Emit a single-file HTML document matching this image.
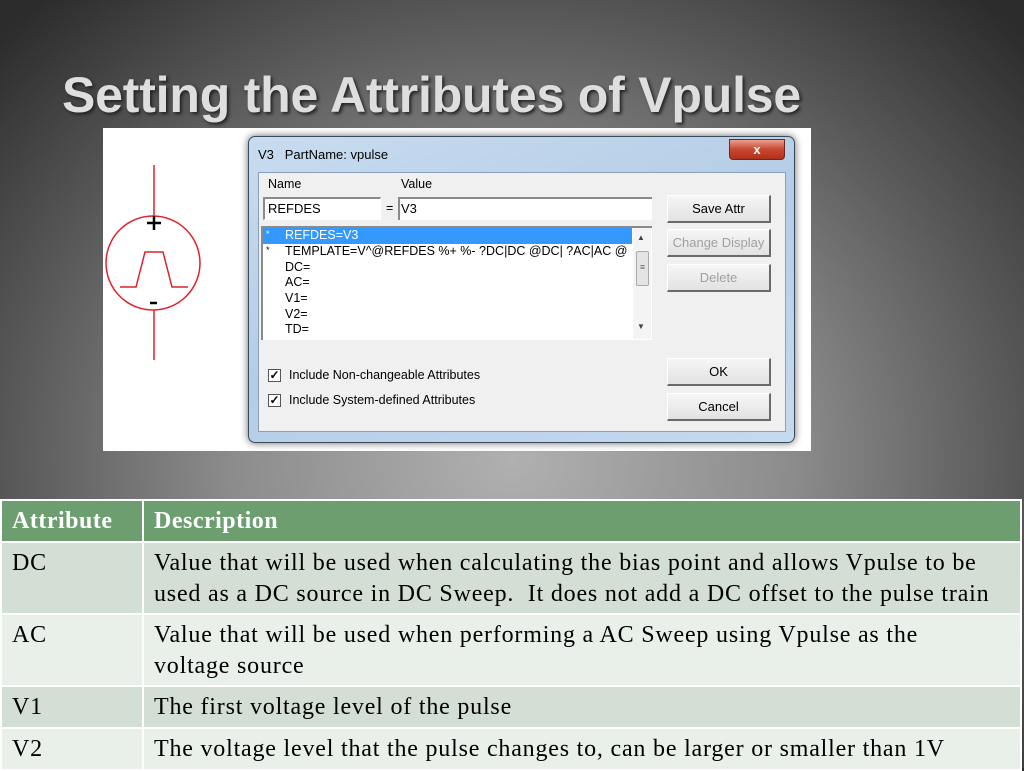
<!DOCTYPE html>
<html><head><meta charset="utf-8"><style>
*{margin:0;padding:0;box-sizing:border-box}
body{width:1024px;height:768px;overflow:hidden;position:relative;background:radial-gradient(ellipse 700px 620px at 512px 460px,#b0b0b0 0%,#8c8c8c 40%,#585858 72%,#2c2c2c 100%);font-family:"Liberation Sans",sans-serif}
.a{position:absolute}
h1{position:absolute;left:62px;top:70px;line-height:1;font-family:"Liberation Sans",sans-serif;font-size:50px;font-weight:bold;color:#dedede;letter-spacing:-0.2px;text-shadow:2px 2px 3px #222;white-space:nowrap}
.dlg{font-size:12.5px;color:#000}
.btn{position:absolute;left:667px;width:104px;height:28px;background:linear-gradient(#f6f6f6,#e2e2e2);border:1px solid #fff;border-right:2px solid #6a6a6a;border-bottom:2px solid #6a6a6a;text-align:center;line-height:25px;font-size:13px}
.dis{color:#a0a0a0}
.li{position:absolute;left:285px;font-size:12.5px;line-height:15px}
.st{position:absolute;left:266px;font-size:9px}
.cb{position:absolute;left:268px;width:13px;height:13px;border:1px solid #555;background:#fff;font-size:12px;line-height:11px;text-align:center;font-weight:bold}
table{position:absolute;left:0;top:499px;width:1022px;border-collapse:collapse;font-family:"Liberation Serif",serif;font-size:24px;letter-spacing:0.8px;color:#000;white-space:nowrap}
td{border:2px solid #fff;padding:5px 4px 0 10px;vertical-align:top;line-height:31px}
tr.h td{background:#6c9e70;color:#fff;font-weight:bold;height:42px;padding-top:5px;letter-spacing:0.5px}
tr.d td{background:#d3ded4}
tr.l td{background:#e9efe9}
</style></head><body>
<h1>Setting the Attributes of Vpulse</h1>
<div class="a" style="left:103px;top:128px;width:708px;height:323px;background:#fff"></div>
<svg class="a" style="left:100px;top:160px" width="110" height="205">
<g fill="none" stroke="#e0222a" stroke-width="1.5">
<line x1="54" y1="5" x2="54" y2="56"/><line x1="54" y1="150" x2="54" y2="200"/>
<circle cx="53" cy="103" r="47"/>
<polyline points="20,127 36,127 45,92 63,92 72,127 88,127"/></g>
<g stroke="#000" stroke-width="2.5"><line x1="47" y1="63" x2="61" y2="63"/><line x1="54" y1="56" x2="54" y2="70"/><line x1="50" y1="143" x2="57" y2="143"/></g>
</svg>
<div class="a" style="left:248px;top:136px;width:547px;height:307px;border-radius:7px;background:linear-gradient(160deg,#c8dcf0,#b4cce6 50%,#c6daee);border:1px solid #3a4a5a;box-shadow:0 0 8px rgba(0,0,0,.6)"></div>
<div class="a dlg" style="left:258px;top:147px;font-size:13px">V3&nbsp;&nbsp; PartName: vpulse</div>
<div class="a" style="left:729px;top:139px;width:56px;height:21px;border-radius:0 0 4px 4px;background:linear-gradient(#e8a090,#c8472f 50%,#b0301c);border:1px solid #6a2a20;color:#fff;font-weight:bold;text-align:center;font-size:13px;line-height:19px">x</div>
<div class="a" style="left:258px;top:172px;width:528px;height:260px;background:#f0f0f0;border:1px solid #8aa0b8"></div>
<div class="a dlg" style="left:268px;top:177px">Name</div>
<div class="a dlg" style="left:401px;top:177px">Value</div>
<div class="a" style="left:263px;top:197px;width:118px;height:23px;background:#fff;border:1px solid #fff;border-top:2px solid #8a8a8a;border-left:2px solid #8a8a8a;font-size:13px;padding:2px 3px">REFDES</div>
<div class="a dlg" style="left:386px;top:201px">=</div>
<div class="a" style="left:398px;top:197px;width:254px;height:23px;background:#fff;border-top:2px solid #8a8a8a;border-left:2px solid #8a8a8a;font-size:13px;padding:2px 1px">V3</div>
<div class="a" style="left:261px;top:226px;width:391px;height:114px;background:#fff;border-top:2px solid #8a8a8a;border-left:2px solid #8a8a8a"></div>
<div class="a" style="left:263px;top:228px;width:369px;height:16px;background:#3399ff"></div>
<div class="a" style="left:633px;top:228px;width:18px;height:111px;background:#f4f4f4"></div>
<div class="a" style="left:636px;top:251px;width:13px;height:35px;background:#e4e4e4;border:1px solid #aaa;border-radius:2px;font-size:9px;text-align:center;line-height:30px;color:#666">≡</div>
<div class="a" style="left:637px;top:233px;font-size:8px;color:#444">▲</div>
<div class="a" style="left:637px;top:322px;font-size:8px;color:#444">▼</div>
<div class="st" style="top:229px;color:#fff">*</div>
<div class="st" style="top:245px">*</div>
<div class="li" style="top:228px;color:#fff">REFDES=V3</div>
<div class="li" style="top:244px;white-space:nowrap;width:346px;overflow:hidden">TEMPLATE=V^@REFDES %+ %- ?DC|DC @DC| ?AC|AC @</div>
<div class="li" style="top:260px">DC=</div>
<div class="li" style="top:275px">AC=</div>
<div class="li" style="top:291px">V1=</div>
<div class="li" style="top:307px">V2=</div>
<div class="li" style="top:322px">TD=</div>
<div class="btn" style="top:195px">Save Attr</div>
<div class="btn dis" style="top:229px">Change Display</div>
<div class="btn dis" style="top:264px">Delete</div>
<div class="btn" style="top:358px">OK</div>
<div class="btn" style="top:393px">Cancel</div>
<div class="cb" style="top:369px">✓</div>
<div class="cb" style="top:394px">✓</div>
<div class="a dlg" style="left:289px;top:368px">Include Non-changeable Attributes</div>
<div class="a dlg" style="left:289px;top:393px">Include System-defined Attributes</div>
<table>
<tr class="h"><td style="width:142px">Attribute</td><td>Description</td></tr>
<tr class="d"><td style="height:72px">DC</td><td>Value that will be used when calculating the bias point and allows Vpulse to be<br>used as a DC source in DC Sweep.&nbsp; It does not add a DC offset to the pulse train</td></tr>
<tr class="l"><td style="height:72px">AC</td><td>Value that will be used when performing a AC Sweep using Vpulse as the<br>voltage source</td></tr>
<tr class="d"><td style="height:42px">V1</td><td>The first voltage level of the pulse</td></tr>
<tr class="l"><td style="height:42px">V2</td><td>The voltage level that the pulse changes to, can be larger or smaller than 1V</td></tr>
</table>
</body></html>
